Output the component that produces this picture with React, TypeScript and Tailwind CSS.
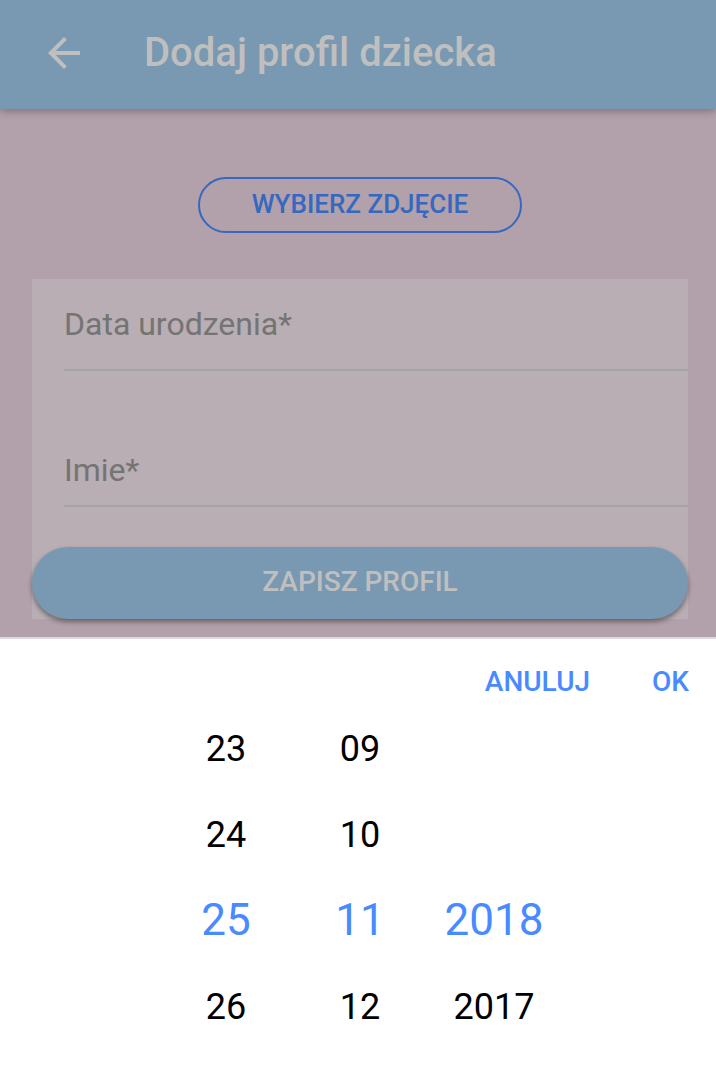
import { useState } from "react";

type Option = string | null;

const columns: { label: string; options: Option[] }[] = [
  { label: "Dzień", options: ["23", "24", "25", "26"] },
  { label: "Miesiąc", options: ["09", "10", "11", "12"] },
  { label: "Rok", options: [null, null, "2018", "2017"] },
];

const SELECTED_ROW = 2;

function Header() {
  return (
    <header className="relative flex h-[109px] items-center bg-[#7999b2] pb-[3px] pl-12 text-[#bfbfbf] shadow-[0_2px_8px_rgba(0,0,0,0.3)]">
      <button type="button" aria-label="Wstecz" className="mr-16 h-8 w-8 shrink-0">
        <svg viewBox="4 4 16 16" className="h-8 w-8" fill="currentColor" aria-hidden="true">
          <path d="M20 11H7.83l5.59-5.59L12 4l-8 8 8 8 1.41-1.41L7.83 13H20v-2z" />
        </svg>
      </button>
      <h1 className="text-[40px] leading-[48px] font-medium">Dodaj profil dziecka</h1>
    </header>
  );
}

function Field({ id, label, className }: { id: string; label: string; className: string }) {
  const [value, setValue] = useState("");
  return (
    <div className={`ml-8 flex border-b-2 border-[#a4a4a6] ${className}`}>
      <label htmlFor={id} className="shrink-0 text-[32px] leading-10 text-[#747474]">
        {label}
      </label>
      <input
        id={id}
        value={value}
        onChange={(event) => setValue(event.target.value)}
        className="h-10 min-w-0 flex-1 bg-transparent px-4 text-[32px] text-[#555555] outline-none"
      />
    </div>
  );
}

function ProfileForm() {
  return (
    <main className="flex flex-col pt-[68px] pr-7 pb-[18px] pl-8">
      <button
        type="button"
        className="h-14 self-center rounded-full border-2 border-[#3568c0] px-13 pb-0.5 text-[26px] leading-8 font-medium text-[#3568c0]"
      >
        WYBIERZ ZDJĘCIE
      </button>
      <form className="mt-[46px] flex flex-col bg-[#b8aeb3]" onSubmit={(e) => e.preventDefault()}>
        <Field id="birth-date" label="Data urodzenia*" className="pt-[25px] pb-[25px]" />
        <Field id="name" label="Imie*" className="pt-[79px] pb-[15px]" />
        <button
          type="submit"
          className="mt-10 h-[72px] rounded-full bg-[#7999b2] pb-0.5 text-[28px] leading-8 font-medium text-[#bfbfbf] shadow-[0_3px_5px_rgba(0,0,0,0.4)]"
        >
          ZAPISZ PROFIL
        </button>
      </form>
    </main>
  );
}

function DatePicker() {
  return (
    <section aria-label="Wybór daty" className="flex-1 border-t-2 border-[#dedadc] bg-white">
      <div className="flex h-[86px] items-center justify-end gap-[62px] pr-[27px] text-[28px] leading-8 font-medium text-[#488aff]">
        <button type="button">ANULUJ</button>
        <button type="button">OK</button>
      </div>
      <div className="flex justify-center pl-1 text-black">
        {columns.map(({ label, options }) => (
          <div key={label} role="group" aria-label={label} className="-mt-[19px] flex w-[134px] flex-col">
            {options.map((option, row) =>
              option === null ? (
                <div key={row} className="h-[86px]" />
              ) : (
                <button
                  key={row}
                  type="button"
                  aria-pressed={row === SELECTED_ROW}
                  className={
                    row === SELECTED_ROW
                      ? "h-[86px] pb-0.5 text-[44px] leading-[52px] text-[#488aff]"
                      : "h-[86px] text-[36px] leading-[44px]"
                  }
                >
                  {option}
                </button>
              ),
            )}
          </div>
        ))}
      </div>
    </section>
  );
}

export default function App() {
  return (
    <div className="flex min-h-screen flex-col bg-[#b2a0aa] font-['Roboto',sans-serif]">
      <Header />
      <ProfileForm />
      <DatePicker />
    </div>
  );
}
